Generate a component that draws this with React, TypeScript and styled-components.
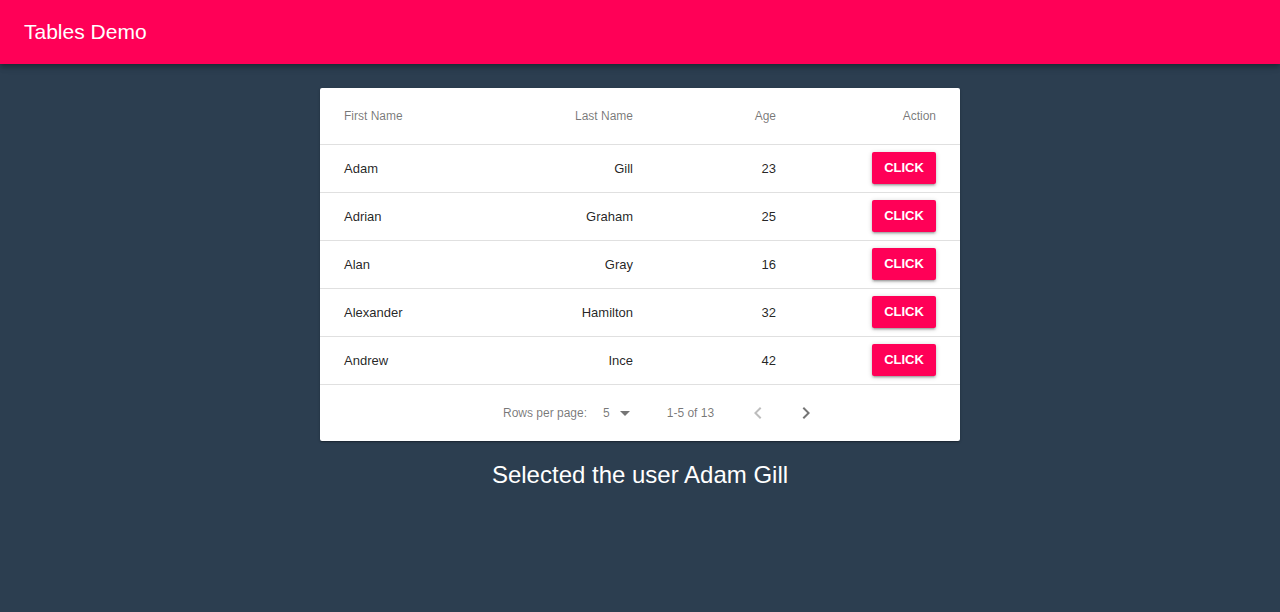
import React from "react";
import styled, { createGlobalStyle } from "styled-components";

const Global = createGlobalStyle`
  html, body { margin: 0; padding: 0; background: #2c3e50; }
  body { font-family: "Liberation Sans", Arial, sans-serif; }
  * { box-sizing: border-box; }
`;

const AppBar = styled.header`
  height: 64px;
  background: #ff0057;
  display: flex;
  align-items: center;
  padding: 0 24px;
  box-shadow: 0 2px 4px -1px rgba(0,0,0,0.2), 0 4px 5px 0 rgba(0,0,0,0.14), 0 1px 10px 0 rgba(0,0,0,0.12);
  position: relative;
`;

const Title = styled.h1`
  margin: 0;
  font-size: 21px;
  font-weight: 400;
  color: #fff;
`;

const Main = styled.main`
  display: flex;
  flex-direction: column;
  align-items: center;
  padding-top: 24px;
`;

const Card = styled.div`
  width: 640px;
  background: #fff;
  border-radius: 2px;
  box-shadow: 0 1px 3px 0 rgba(0,0,0,0.2), 0 1px 1px 0 rgba(0,0,0,0.14), 0 2px 1px -1px rgba(0,0,0,0.12);
`;

const Row = styled.div<{ $head?: boolean }>`
  display: grid;
  grid-template-columns: 184px 185px 143px 128px;
  height: ${(p) => (p.$head ? 57 : 48)}px;
  border-bottom: 1px solid rgba(224,224,224,1);
  align-items: center;
`;

const Cell = styled.div<{ $head?: boolean; $align?: "left" | "right"; $last?: boolean }>`
  padding: ${(p) => (p.$last ? "0 24px" : "0 56px 0 24px")};
  font-size: ${(p) => (p.$head ? 12 : 13)}px;
  color: ${(p) => (p.$head ? "rgba(0,0,0,0.54)" : "rgba(0,0,0,0.87)")};
  white-space: nowrap;
  display: flex;
  justify-content: ${(p) => (p.$align === "right" ? "flex-end" : "flex-start")};
`;

const Button = styled.button`
  width: 64px;
  height: 32px;
  border: none;
  border-radius: 2px;
  background: #ff0057;
  color: #fff;
  font-family: "Liberation Sans", Arial, sans-serif;
  font-size: 13px;
  font-weight: 700;
  text-transform: uppercase;
  padding: 0 0 2px;
  margin-top: -1px;
  box-shadow: 0 1px 5px 0 rgba(0,0,0,0.2), 0 2px 2px 0 rgba(0,0,0,0.14), 0 3px 1px -2px rgba(0,0,0,0.12);
  cursor: pointer;
`;

const Footer = styled.div`
  height: 56px;
  display: flex;
  align-items: center;
  padding-left: 183px;
  font-size: 12px;
  color: rgba(0,0,0,0.54);
`;

const Select = styled.div`
  display: flex;
  align-items: center;
  margin-left: 16px;
  gap: 3px;
`;

const Range = styled.span`
  margin-left: 30px;
`;

const NavBtn = styled.span<{ $disabled?: boolean }>`
  display: inline-flex;
  width: 48px;
  justify-content: center;
  color: ${(p) => (p.$disabled ? "rgba(0,0,0,0.26)" : "rgba(0,0,0,0.54)")};
`;

const Nav = styled.div`
  display: flex;
  margin-left: 20px;
`;

const Selected = styled.h2`
  margin: 20px 0 0;
  font-size: 24px;
  font-weight: 400;
  color: #fff;
`;

const data = [
  ["Adam", "Gill", 23],
  ["Adrian", "Graham", 25],
  ["Alan", "Gray", 16],
  ["Alexander", "Hamilton", 32],
  ["Andrew", "Ince", 42],
] as const;

const Chevron = ({ dir }: { dir: "left" | "right" }) => (
  <svg width="24" height="24" viewBox="0 0 24 24" fill="currentColor">
    {dir === "left" ? (
      <path d="M15.41 7.41L14 6l-6 6 6 6 1.41-1.41L10.83 12z" />
    ) : (
      <path d="M10 6L8.59 7.41 13.17 12l-4.58 4.59L10 18l6-6z" />
    )}
  </svg>
);

export default function App() {
  return (
    <>
      <Global />
      <AppBar>
        <Title>Tables Demo</Title>
      </AppBar>
      <Main>
        <Card>
          <Row $head>
            <Cell $head>First Name</Cell>
            <Cell $head $align="right">Last Name</Cell>
            <Cell $head $align="right">Age</Cell>
            <Cell $head $align="right" $last>Action</Cell>
          </Row>
          {data.map(([f, l, a]) => (
            <Row key={f}>
              <Cell>{f}</Cell>
              <Cell $align="right">{l}</Cell>
              <Cell $align="right">{a}</Cell>
              <Cell $align="right" $last>
                <Button>Click</Button>
              </Cell>
            </Row>
          ))}
          <Footer>
            <span>Rows per page:</span>
            <Select>
              <span>5</span>
              <svg width="24" height="24" viewBox="0 0 24 24" fill="currentColor">
                <path d="M7 10l5 5 5-5z" />
              </svg>
            </Select>
            <Range>1-5 of 13</Range>
            <Nav>
              <NavBtn $disabled>
                <Chevron dir="left" />
              </NavBtn>
              <NavBtn>
                <Chevron dir="right" />
              </NavBtn>
            </Nav>
          </Footer>
        </Card>
        <Selected>Selected the user Adam Gill</Selected>
      </Main>
    </>
  );
}
